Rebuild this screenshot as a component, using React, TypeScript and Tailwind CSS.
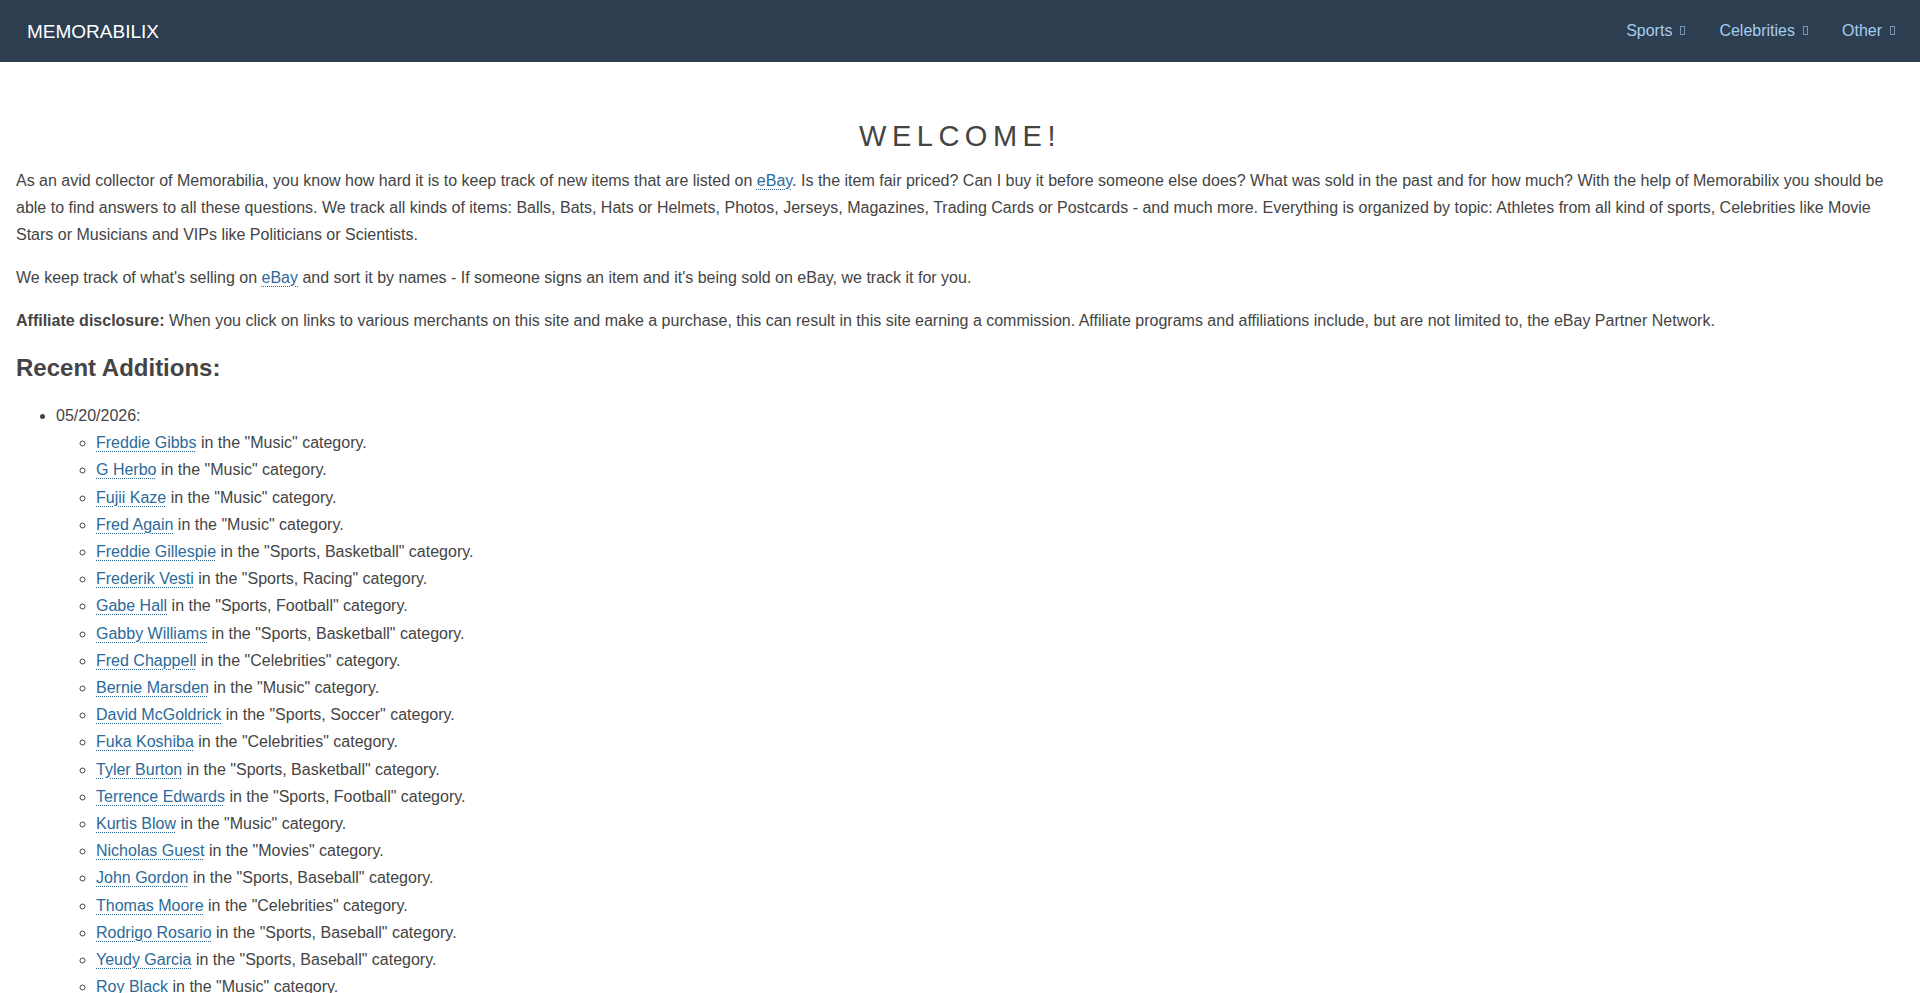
import type { ReactNode } from 'react';

// Latest names picked up from eBay listings, newest first.
const RECENT = [
  { name: 'Freddie Gibbs', category: 'Music' },
  { name: 'G Herbo', category: 'Music' },
  { name: 'Fujii Kaze', category: 'Music' },
  { name: 'Fred Again', category: 'Music' },
  { name: 'Freddie Gillespie', category: 'Sports, Basketball' },
  { name: 'Frederik Vesti', category: 'Sports, Racing' },
  { name: 'Gabe Hall', category: 'Sports, Football' },
  { name: 'Gabby Williams', category: 'Sports, Basketball' },
  { name: 'Fred Chappell', category: 'Celebrities' },
  { name: 'Bernie Marsden', category: 'Music' },
  { name: 'David McGoldrick', category: 'Sports, Soccer' },
  { name: 'Fuka Koshiba', category: 'Celebrities' },
  { name: 'Tyler Burton', category: 'Sports, Basketball' },
  { name: 'Terrence Edwards', category: 'Sports, Football' },
  { name: 'Kurtis Blow', category: 'Music' },
  { name: 'Nicholas Guest', category: 'Movies' },
  { name: 'John Gordon', category: 'Sports, Baseball' },
  { name: 'Thomas Moore', category: 'Celebrities' },
  { name: 'Rodrigo Rosario', category: 'Sports, Baseball' },
  { name: 'Yeudy Garcia', category: 'Sports, Baseball' },
  { name: 'Roy Black', category: 'Music' },
  { name: 'Sam Hunt', category: 'Music' },
  { name: 'Mike Evans', category: 'Sports, Football' },
];

const NAV = ['Sports', 'Celebrities', 'Other'];

const A = ({ children }: { children: ReactNode }) => (
  <a href="#" className="text-[#2b6a9b] underline decoration-dotted decoration-1 underline-offset-[3px]">
    {children}
  </a>
);

const Caret = () => (
  <span className="ml-[8px] inline-block h-[9px] w-[5px] border border-current opacity-60 align-[-1px]" />
);

export default function App() {
  return (
    <div className="min-h-screen bg-white font-['Liberation_Sans',Arial,sans-serif] text-[16px] leading-[27px] text-[#444]">
      <nav className="flex h-[62px] items-center justify-between bg-[#2c3e50] pl-[27px] pr-[8px]">
        <a href="#" className="text-[19px] text-white">MEMORABILIX</a>
        <ul className="flex -translate-y-[1px]">
          {NAV.map((item) => (
            <li key={item}>
              <a href="#" className="flex items-center px-[17px] text-[16px] text-[#a5cdee]">
                {item}
                <Caret />
              </a>
            </li>
          ))}
        </ul>
      </nav>

      <main className="px-[16px]">
        <h1 className="mt-[57px] mb-[14px] text-center text-[29px] leading-[34px] tracking-[5.5px] text-[#444]">
          WELCOME!
        </h1>

        <p className="mb-[16px]">
          As an avid collector of Memorabilia, you know how hard it is to keep track of new items that are listed on{' '}
          <A>eBay</A>. Is the item fair priced? Can I buy it before someone else does? What was sold in the past and
          for how much? With the help of Memorabilix you should be able to find answers to all these questions. We
          track all kinds of items: Balls, Bats, Hats or Helmets, Photos, Jerseys, Magazines, Trading Cards or
          Postcards - and much more. Everything is organized by topic: Athletes from all kind of sports, Celebrities
          like Movie Stars or Musicians and VIPs like Politicians or Scientists.
        </p>
        <p className="mb-[16px]">
          We keep track of what's selling on <A>eBay</A> and sort it by names - If someone signs an item and it's
          being sold on eBay, we track it for you.
        </p>
        <p className="mb-[20px]">
          <b>Affiliate disclosure:</b> When you click on links to various merchants on this site and make a purchase,
          this can result in this site earning a commission. Affiliate programs and affiliations include, but are not
          limited to, the eBay Partner Network.
        </p>

        <h2 className="mb-[21px] text-[24px] leading-[27px] font-bold">Recent Additions:</h2>

        <ul className="list-disc pl-[40px] leading-[27.2px]">
          <li>
            05/20/2026:
            <ul className="list-[circle] pl-[40px]">
              {RECENT.map((r) => (
                <li key={r.name}>
                  <A>{r.name}</A> in the "{r.category}" category.
                </li>
              ))}
            </ul>
          </li>
        </ul>
      </main>
    </div>
  );
}
